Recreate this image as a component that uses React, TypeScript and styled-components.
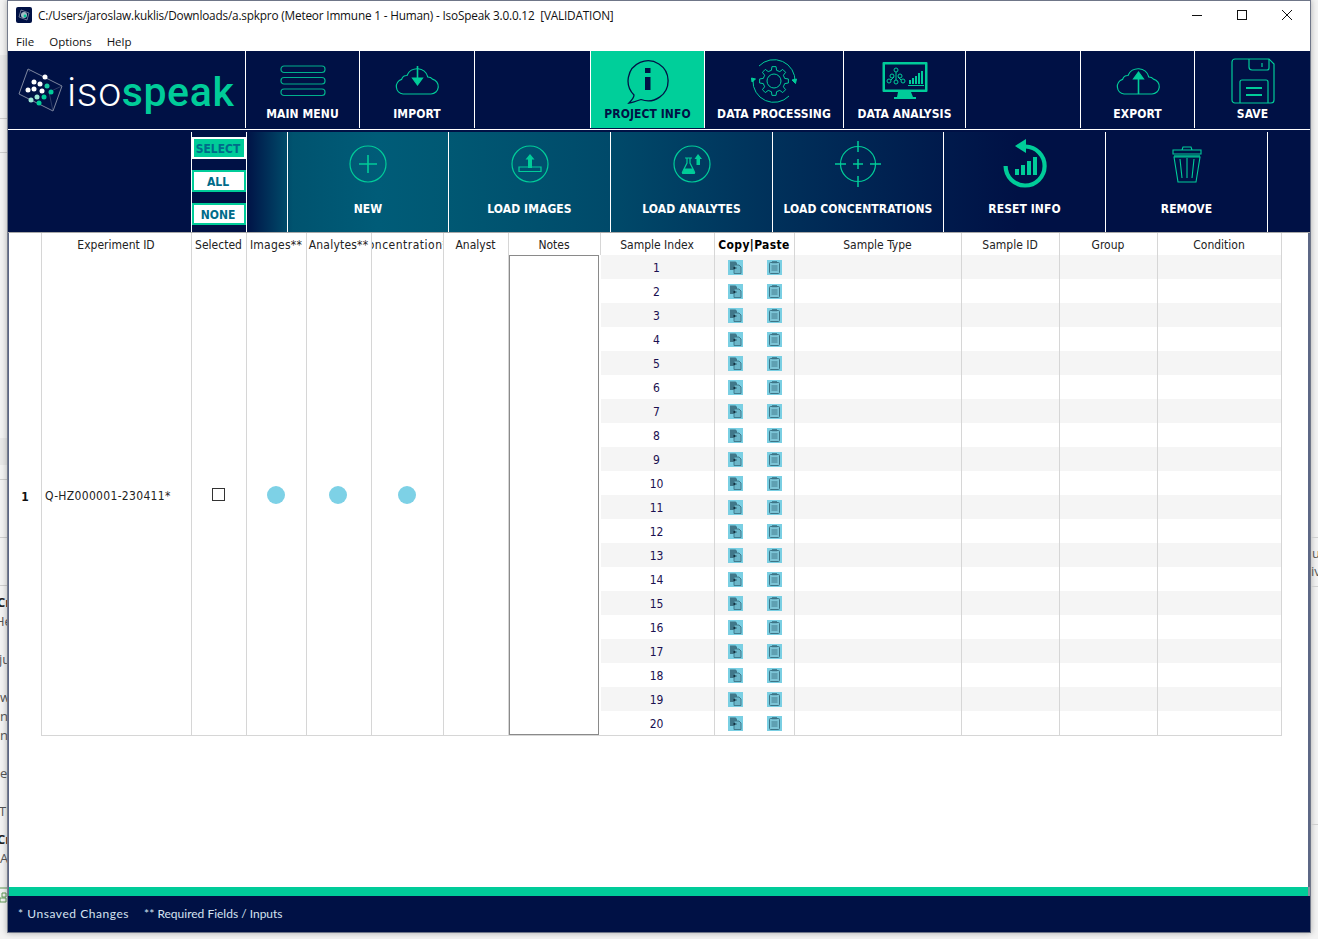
import React from "react";
import styled, { createGlobalStyle } from "styled-components";

const NAVY = "#001145";
const GREEN = "#00cc99";
const LINE = "#d6d6d6";
const LABEL_FONT = '"DejaVu Sans Condensed", "DejaVu Sans", sans-serif';

const Global = createGlobalStyle`
  html, body {
    margin: 0;
    padding: 0;
    background: #f3f3f3;
    overflow: hidden;
  }
  * {
    box-sizing: border-box;
  }
`;

const Page = styled.div`
  display: flex;
  width: 1318px;
  height: 939px;
  overflow: hidden;
  align-items: flex-start;
`;
const Gutter = styled.div`
  width: 7px;
  height: 939px;
  flex: none;
  overflow: hidden;
  display: flex;
  flex-direction: column;
  font-family: "Open Sans", sans-serif;
  font-size: 13px;
  line-height: 16px;
  color: #555;
`;
const Scrap = styled.div<{ $top: number; $bold?: boolean; $shift?: number }>`
  margin-top: ${({ $top }) => $top}px;
  margin-left: ${({ $shift }) => $shift ?? 0}px;
  height: 16px;
  flex: none;
  white-space: nowrap;
  font-weight: ${({ $bold }) => ($bold ? 700 : 400)};
  color: ${({ $bold }) => ($bold ? "#222" : "#555")};
`;
const Band = styled.div<{ $top: number; $height: number }>`
  margin-top: ${({ $top }) => $top}px;
  height: ${({ $height }) => $height}px;
  flex: none;
  background: #e9e9e9;
`;
const Rule = styled.div<{ $top: number }>`
  margin-top: ${({ $top }) => $top}px;
  height: 1px;
  flex: none;
  background: #cfcfcf;
`;
const BadgeScrap = styled.svg`
  margin-top: 21px;
  flex: none;
`;
const Win = styled.div`
  width: 1304px;
  height: 933px;
  flex: none;
  display: flex;
  flex-direction: column;
  background: #fff;
  border: 1px solid #6f7688;
  border-left-color: #757c8c;
  box-shadow: 0 0 6px rgba(0, 0, 0, 0.3);
`;
const TitleBar = styled.div`
  height: 31px;
  display: flex;
  align-items: center;
  padding: 0 0 3px 8px;
  flex: none;
`;
const TitleText = styled.span`
  margin-left: 6px;
  font-family: "Open Sans", sans-serif;
  font-size: 11.8px;
  color: #111;
  white-space: pre;
  letter-spacing: -0.016em;
`;
const WinButtons = styled.div`
  margin-left: auto;
  display: flex;
  align-items: center;
  gap: 35px;
  padding-right: 18px;
`;
const MenuBar = styled.div`
  height: 19px;
  display: flex;
  align-items: center;
  gap: 15px;
  padding: 0 0 1px 8px;
  flex: none;
  font-family: "Open Sans", sans-serif;
  font-size: 11.5px;
  color: #111;
`;
const TopNav = styled.div`
  height: 79px;
  display: flex;
  flex: none;
  padding-bottom: 1px;
  background: ${NAVY};
  border-bottom: 1px solid #fff;
`;
const LogoCell = styled.div`
  width: 238px;
  flex: none;
  display: flex;
  align-items: center;
  padding-left: 10px;
  border-right: 1px solid #fff;
`;
const LogoText = styled.div`
  margin-left: 4px;
  margin-top: 4px;
  font-family: Roboto, sans-serif;
  font-size: 41px;
  line-height: 48px;
  letter-spacing: 0.6px;
  font-weight: 300;
  color: #fff;
  white-space: nowrap;
`;
const LogoAccent = styled.span`
  font-weight: 500;
  color: ${GREEN};
`;
const NavCell = styled.div<{ $width: number; $active?: boolean }>`
  width: ${({ $width }) => $width}px;
  flex: none;
  display: flex;
  flex-direction: column;
  align-items: center;
  padding-top: 3px;
  border-right: 1px solid #fff;
  background: ${({ $active }) => ($active ? "#00cf9a" : "transparent")};
  color: ${({ $active }) => ($active ? NAVY : "#fff")};
  &:last-child {
    border-right: none;
  }
`;
const NavSlot = styled.div`
  height: 53px;
  display: flex;
  align-items: center;
  justify-content: center;
`;
const ToolLabel = styled.div`
  font-family: ${LABEL_FONT};
  font-weight: 700;
  font-size: 12px;
  line-height: 14px;
  letter-spacing: 0.08px;
  white-space: nowrap;
`;
const SubNav = styled.div`
  height: 103px;
  flex: none;
  padding-top: 2px;
  background: ${NAVY};
  border-bottom: 1px solid #a9a9a9;
`;
const SubRow = styled.div`
  height: 100px;
  display: flex;
  background: linear-gradient(
    90deg,
    ${NAVY} 238px,
    #00536f 285px,
    #005c78 370px,
    #005873 440px,
    #004a6a 600px,
    #00305a 770px,
    #001a4c 935px,
    ${NAVY} 1010px
  );
`;
const SubBlank = styled.div<{ $width: number }>`
  width: ${({ $width }) => $width}px;
  flex: none;
  border-right: 1px solid #fff;
`;
const SelectColumn = styled.div`
  width: 55px;
  flex: none;
  display: flex;
  flex-direction: column;
  gap: 11px;
  padding: 5px 0 0 0;
  border-right: 1px solid #fff;
  background: ${NAVY};
`;
const SelectChip = styled.div<{ $head?: boolean }>`
  height: 22px;
  display: flex;
  align-items: center;
  justify-content: center;
  padding: 1px 2px 0 0;
  font-family: ${LABEL_FONT};
  font-weight: 700;
  font-size: 12px;
  color: #006b8a;
  border: 2px solid ${({ $head }) => ($head ? "#fff" : GREEN)};
  background: ${({ $head }) => ($head ? GREEN : "#fff")};
`;
const SubCell = styled.div<{ $width: number }>`
  width: ${({ $width }) => $width}px;
  flex: none;
  display: flex;
  flex-direction: column;
  align-items: center;
  color: #fff;
  border-right: 1px solid #fff;
`;
const SubSlot = styled.div`
  height: 64px;
  display: flex;
  align-items: center;
  justify-content: center;
`;
const SubLabel = styled(ToolLabel)`
  margin-top: 6px;
`;
const Content = styled.div`
  flex: 1;
  min-height: 0;
  background: #fff;
  border-left: 1px solid #5c6785;
  border-right: 2px solid #5c6785;
`;
const Sheet = styled.div`
  display: grid;
  width: 1273px;
  grid-template-columns: 32px 151px 55px 60px 65px 72px 65px 92px 114px 80px 167px 98px 98px 124px;
  grid-template-rows: 22px repeat(19, 24px) 25px;
  font-family: ${LABEL_FONT};
  font-size: 12px;
  color: #222;
`;
const HeadCell = styled.div<{ $first?: boolean; $track?: number }>`
  display: flex;
  align-items: center;
  justify-content: center;
  overflow: hidden;
  white-space: nowrap;
  padding: 1px 1px 0 0;
  letter-spacing: ${({ $track }) => $track ?? 0}px;
  border-right: 1px solid ${LINE};
  border-left: ${({ $first }) => ($first ? `1px solid ${LINE}` : "none")};
`;
const HeadBold = styled(HeadCell)`
  font-weight: 700;
  color: #000;
  letter-spacing: 0.35px;
`;
const RowNo = styled.div`
  grid-column: 1;
  grid-row: 2 / span 20;
  display: flex;
  align-items: center;
  justify-content: center;
  padding-top: 2px;
  font-weight: 700;
  color: #111;
`;
const SpanCell = styled.div<{ $col: number; $first?: boolean; $left?: boolean }>`
  grid-column: ${({ $col }) => $col};
  grid-row: 2 / span 20;
  display: flex;
  align-items: center;
  justify-content: ${({ $left }) => ($left ? "flex-start" : "center")};
  padding: ${({ $left }) => ($left ? "1px 0 0 3px" : "0 2px 0 0")};
  letter-spacing: ${({ $left }) => ($left ? "0.32px" : "0")};
  border-right: 1px solid ${LINE};
  border-bottom: 1px solid ${LINE};
  border-left: ${({ $first }) => ($first ? `1px solid ${LINE}` : "none")};
`;
const NotesCell = styled(SpanCell)`
  border: none;
  border-bottom: 1px solid ${LINE};
  padding: 0;
  justify-content: flex-start;
`;
const NotesBox = styled.div`
  width: 90px;
  height: 100%;
  border: 1px solid #8a8a8a;
  background: #fff;
`;
const Box = styled.div`
  width: 13px;
  height: 13px;
  border: 1px solid #333;
  background: #fff;
  margin-top: -1px;
`;
const Dot = styled.div`
  width: 18px;
  height: 18px;
  border-radius: 50%;
  background: #7dd1e6;
`;
const BodyCell = styled.div<{ $odd: boolean; $last: boolean; $column: number; $row: number }>`
  grid-column: ${({ $column }) => $column};
  grid-row: ${({ $row }) => $row};
  display: flex;
  align-items: center;
  justify-content: center;
  padding: 1px 2px 0 0;
  background: ${({ $odd }) => ($odd ? "#f5f5f5" : "#fff")};
  border-bottom: ${({ $last }) => ($last ? `1px solid ${LINE}` : "none")};
  border-right: 1px solid ${LINE};
  color: #222;
`;
const IndexCell = styled(BodyCell)`
  font-size: 12px;
  color: #1a1050;
`;
const ActionCell = styled(BodyCell)`
  gap: 24px;
  padding: 1px 0 0 0;
`;
const AccentBar = styled.div`
  height: 9px;
  flex: none;
  background: ${GREEN};
  border-left: 1px solid #5c6785;
  border-right: 2px solid #8a8f9c;
`;
const Footer = styled.div`
  height: 36px;
  flex: none;
  display: flex;
  align-items: center;
  gap: 15px;
  padding: 0 0 1px 10px;
  background: ${NAVY};
  font-family: Lato, sans-serif;
  font-size: 12px;
  color: #d5e2f0;
  white-space: nowrap;
`;
const FootNote = styled.span<{ $track: number }>`
  letter-spacing: ${({ $track }) => $track}px;
`;

const gearPath = (cx: number, cy: number, ro: number, ri: number, teeth: number) => {
  const pts: string[] = [];
  const step = (Math.PI * 2) / teeth;
  for (let i = 0; i < teeth; i++) {
    const a = i * step;
    const offs: [number, number][] = [
      [-0.3, ri],
      [-0.18, ro],
      [0.18, ro],
      [0.3, ri],
    ];
    offs.forEach(([o, r]) => {
      const t = a + o * step;
      pts.push(`${(cx + Math.cos(t) * r).toFixed(2)} ${(cy + Math.sin(t) * r).toFixed(2)}`);
    });
  }
  return `M${pts.join("L")}Z`;
};

const Logo = () => (
  <svg width="45" height="44" viewBox="0 0 45 44" fill="none">
    <path d="M10 1 44 18 35 43 1 26Z" stroke="#8b93a8" strokeWidth="0.9" />
    <path d="M10 1 12 4M35 43 31 24 44 18" stroke="#5c6684" strokeWidth="0.5" />
    {[
      [27, 9, "#fff"],
      [16, 14, "#fff"],
      [22, 16, "#fff"],
      [29, 18, "#19c9a0"],
      [10, 22, "#fff"],
      [16, 21, "#fff"],
      [24, 23, "#fff"],
      [33, 24, GREEN],
      [19, 29, "#9fe8d6"],
      [26, 29, GREEN],
      [13, 32, "#9fe8d6"],
      [21, 35, GREEN],
    ].map(([x, y, c], i) => (
      <circle key={i} cx={x as number} cy={y as number} r="2.5" fill={c as string} />
    ))}
  </svg>
);

const MenuIcon = () => (
  <svg width="46" height="32" viewBox="0 0 46 32" fill="none" stroke={GREEN} strokeWidth="1.2" opacity="0.85">
    <rect x="1" y="1" width="44" height="6.5" rx="3" />
    <rect x="1" y="12.5" width="44" height="6.5" rx="3" />
    <rect x="1" y="24" width="44" height="6.5" rx="3" />
  </svg>
);

const CLOUD = "M9 28H37A7.5 7.5 0 0 0 38.5 13.2 6 6 0 0 0 33.8 11A11 11 0 0 0 13 9.5 5.5 5.5 0 0 0 7.6 13.4 7.5 7.5 0 0 0 9 28Z";

const ImportIcon = () => (
  <svg width="46" height="30" viewBox="0 0 46 30" fill="none" stroke={GREEN} strokeWidth="1.2">
    <path d={CLOUD} />
    <path d="M23.5 0V17" strokeWidth="1.6" />
    <path d="M18.5 12H28.5L23.5 19Z" fill={GREEN} />
  </svg>
);

const ExportIcon = () => (
  <svg width="46" height="30" viewBox="0 0 46 30" fill="none" stroke={GREEN} strokeWidth="1.2">
    <path d={CLOUD} />
    <path d="M23.5 28V10" strokeWidth="1.6" />
    <path d="M18.5 13H28.5L23.5 6Z" fill={GREEN} />
  </svg>
);

const InfoIcon = () => (
  <svg width="44" height="46" viewBox="0 0 44 46" fill="none">
    <path
      d="M3 45C6 42 8 39 8 37A20 20 0 1 1 15 41.5C11 43 7 44.5 3 45Z"
      stroke={NAVY}
      strokeWidth="1.3"
    />
    <rect x="19" y="10" width="5.5" height="5" fill={NAVY} />
    <rect x="19" y="19" width="5.5" height="13" fill={NAVY} />
  </svg>
);

const GearIcon = () => (
  <svg width="46" height="46" viewBox="0 0 46 46" fill="none" stroke={GREEN} strokeWidth="1">
    <path d={gearPath(23, 23, 14.5, 11, 8)} />
    <circle cx="23" cy="23" r="7" />
    <path d="M44 24A21 21 0 0 0 8 8M2 22A21 21 0 0 0 38 38" />
    <path d="M41 22 44.5 25.5 45.5 21ZM1 24 4.5 21 .5 20Z" fill={GREEN} />
  </svg>
);

const AnalysisIcon = () => (
  <svg width="46" height="37" viewBox="0 0 46 37" fill="none">
    <rect x="0.5" y="0" width="45" height="30" rx="1" fill={GREEN} />
    <rect x="3" y="2.5" width="40" height="25" fill={NAVY} />
    <path d="M16 30H29L31 35H34V37H12V35H15Z" fill={GREEN} />
    <g stroke={GREEN} strokeWidth="1">
      <circle cx="14" cy="8" r="2" />
      <circle cx="10" cy="14" r="2" />
      <circle cx="18" cy="14" r="2" />
      <circle cx="7" cy="19" r="2" />
      <circle cx="14" cy="20" r="2" />
      <circle cx="21" cy="19" r="2" />
      <path d="M14 10V18M9 18 12 15M19 18 16 15" />
    </g>
    <g fill={GREEN}>
      <rect x="27" y="18" width="2" height="4" />
      <rect x="30" y="16" width="2" height="6" />
      <rect x="33" y="14" width="2" height="8" />
      <rect x="36" y="11" width="2" height="11" />
      <rect x="39" y="9" width="2" height="13" />
      <rect x="26" y="23" width="16" height="1" />
    </g>
  </svg>
);

const SaveIcon = () => (
  <svg width="44" height="46" viewBox="0 0 44 46" fill="none" stroke={GREEN} strokeWidth="1.2">
    <path d="M4 1H38L43 6V42A3 3 0 0 1 40 45H4A3 3 0 0 1 1 42V4A3 3 0 0 1 4 1Z" />
    <path d="M18 1V9A3 3 0 0 0 21 12H36A2 2 0 0 0 38 10V1M31 5V9" />
    <path d="M9 45V24A2 2 0 0 1 11 22H35A2 2 0 0 1 37 24V45" />
    <path d="M15 30H31M15 37H31" strokeWidth="1.8" />
  </svg>
);

const PlusIcon = () => (
  <svg width="38" height="38" viewBox="0 0 38 38" fill="none" stroke={GREEN} strokeWidth="1.2">
    <circle cx="19" cy="19" r="18" />
    <path d="M19 10V28M10 19H28" strokeWidth="1.6" />
  </svg>
);

const ImagesIcon = () => (
  <svg width="38" height="38" viewBox="0 0 38 38" fill="none" stroke={GREEN} strokeWidth="1.2">
    <circle cx="19" cy="19" r="18" />
    <path d="M8 22V26.5H30V22H8Z" />
    <path d="M19 9 23.5 14.5H21V23H17V14.5H14.5Z" fill={GREEN} stroke="none" />
  </svg>
);

const AnalytesIcon = () => (
  <svg width="38" height="38" viewBox="0 0 38 38" fill="none" stroke={GREEN} strokeWidth="1.2">
    <circle cx="19" cy="19" r="18" />
    <path d="M12 13H19M14 13V18L9.5 27A1 1 0 0 0 10.5 28.5H20.5A1 1 0 0 0 21.5 27L17 18V13" />
    <path d="M11 23.5H20L21.5 28.5H9.5Z" fill={GREEN} stroke="none" />
    <path d="M25 9 29 14H27V20H23.5V14H21.5Z" fill={GREEN} stroke="none" />
  </svg>
);

const TargetIcon = () => (
  <svg width="48" height="48" viewBox="0 0 48 48" fill="none" stroke={GREEN} strokeWidth="1.2">
    <circle cx="24" cy="24" r="17.5" />
    <path d="M24 1V12M24 36V47M1 24H12M36 24H47M24 19V29M19 24H29" strokeWidth="1.5" />
  </svg>
);

const ResetIcon = () => (
  <svg width="46" height="50" viewBox="0 0 46 50" fill="none">
    <path d="M23.5 7.5A19.5 19.5 0 1 1 3.6 27" stroke={GREEN} strokeWidth="4.2" />
    <path d="M24 0V14L13 7Z" fill={GREEN} />
    <rect x="13" y="30" width="4" height="6" fill={GREEN} />
    <rect x="19" y="26" width="4" height="10" fill={GREEN} />
    <rect x="25" y="22" width="4" height="14" fill={GREEN} />
    <rect x="31" y="18" width="4" height="18" fill={GREEN} />
  </svg>
);

const TrashIcon = () => (
  <svg width="30" height="38" viewBox="0 0 30 38" fill="none" stroke={GREEN} strokeWidth="1.1">
    <path d="M1 5H29V9H1ZM10 5 11 2H19L20 5" />
    <path d="M2 12 6 37H24L28 12Z" />
    <path d="M8 14 10 33M15 13V33M22 14 20 33" />
    <path d="M2 11H28" strokeWidth="1.3" />
  </svg>
);

const CopyGlyph = () => (
  <svg width="15" height="15" viewBox="0 0 15 15">
    <rect width="15" height="15" fill="#7acfe3" />
    <path d="M2 1.5H7.5L9 3V10H2Z" fill="#41788a" />
    <path d="M6 5H11L13 7V13.5H6Z" fill="#6bb6c9" stroke="#3d7486" strokeWidth="0.9" />
    <path d="M5 8H8.5M6.5 6.8V9.2" stroke="#12303f" strokeWidth="1" />
  </svg>
);

const PasteGlyph = () => (
  <svg width="15" height="15" viewBox="0 0 15 15" fill="none">
    <rect width="15" height="15" fill="#7acfe3" />
    <rect x="2.5" y="2.5" width="10" height="11" rx="1" fill="#7cc4d6" stroke="#3d7486" strokeWidth="1" />
    <rect x="5" y="1.2" width="5" height="2" fill="#3d7486" />
    <path d="M4.5 6H10.5M4.5 8H10.5M4.5 10H10.5" stroke="#3d7486" strokeWidth="0.9" />
  </svg>
);

const AppMark = () => (
  <svg width="16" height="16" viewBox="0 0 16 16">
    <rect width="16" height="16" rx="2" fill={NAVY} />
    <path d="M5 3 13 6 11 13 3 10Z" fill="none" stroke="#9aa3b5" strokeWidth="0.7" />
    <circle cx="8" cy="8" r="3" fill="#cfe9e6" opacity="0.8" />
    <circle cx="9" cy="9" r="1.4" fill={GREEN} />
  </svg>
);

const MinGlyph = () => (
  <svg width="10" height="10" viewBox="0 0 10 10" stroke="#111" strokeWidth="1">
    <path d="M0 5.5H10" />
  </svg>
);
const MaxGlyph = () => (
  <svg width="10" height="10" viewBox="0 0 10 10" fill="none" stroke="#111" strokeWidth="1">
    <rect x="0.5" y="0.5" width="9" height="9" />
  </svg>
);
const CloseGlyph = () => (
  <svg width="10" height="10" viewBox="0 0 10 10" stroke="#111" strokeWidth="1">
    <path d="M0 0 10 10M10 0 0 10" />
  </svg>
);

const topCells = [
  { width: 114, label: "MAIN MENU", icon: <MenuIcon /> },
  { width: 115, label: "IMPORT", icon: <ImportIcon /> },
  { width: 116 },
  { width: 114, label: "PROJECT INFO", icon: <InfoIcon />, active: true },
  { width: 139, label: "DATA PROCESSING", icon: <GearIcon /> },
  { width: 122, label: "DATA ANALYSIS", icon: <AnalysisIcon /> },
  { width: 115 },
  { width: 114, label: "EXPORT", icon: <ExportIcon /> },
  { width: 115, label: "SAVE", icon: <SaveIcon /> },
];

const subCells = [
  { width: 161, label: "NEW", icon: <PlusIcon /> },
  { width: 162, label: "LOAD IMAGES", icon: <ImagesIcon /> },
  { width: 162, label: "LOAD ANALYTES", icon: <AnalytesIcon /> },
  { width: 171, label: "LOAD CONCENTRATIONS", icon: <TargetIcon /> },
  { width: 162, label: "RESET INFO", icon: <ResetIcon /> },
  { width: 162, label: "REMOVE", icon: <TrashIcon /> },
];

const headers: { text: string; track?: number }[] = [
  { text: "Experiment ID" },
  { text: "Selected" },
  { text: "Images**", track: 0.25 },
  { text: "Analytes**", track: 0.2 },
  { text: "Concentration**", track: 0.5 },
  { text: "Analyst" },
  { text: "Notes" },
  { text: "Sample Index" },
];

const rows = Array.from({ length: 20 }, (_, i) => i + 1);

const App = () => {
  return (
    <Page>
      <Global />
      <Gutter>
        <Band $top={55} $height={35} />
        <Rule $top={28} />
        <Rule $top={33} />
        <Band $top={285} $height={27} />
        <Rule $top={14} />
        <Rule $top={57} />
        <Rule $top={47} />
        <Scrap $top={8} $bold $shift={-3}>
          Cr
        </Scrap>
        <Scrap $top={3} $shift={-5}>
          He
        </Scrap>
        <Scrap $top={22} $shift={-1}>
          ju
        </Scrap>
        <Scrap $top={22}>w</Scrap>
        <Scrap $top={3}>n</Scrap>
        <Scrap $top={3}>n</Scrap>
        <Scrap $top={22}>e</Scrap>
        <Scrap $top={22} $shift={-1}>
          Th
        </Scrap>
        <Scrap $top={12} $bold $shift={-3}>
          Cr
        </Scrap>
        <Scrap $top={3}>A</Scrap>
        <BadgeScrap width="7" height="17" viewBox="0 0 7 17" fill="none" stroke="#5f9a55" strokeWidth="1">
          <path d="M0 1H7M2 6H6V10H2ZM0 11H6V15H0Z" />
        </BadgeScrap>
      </Gutter>
      <Win>
        <TitleBar>
          <AppMark />
          <TitleText>
            {"C:/Users/jaroslaw.kuklis/Downloads/a.spkpro (Meteor Immune 1 - Human) - IsoSpeak 3.0.0.12  [VALIDATION]"}
          </TitleText>
          <WinButtons>
            <MinGlyph />
            <MaxGlyph />
            <CloseGlyph />
          </WinButtons>
        </TitleBar>
        <MenuBar>
          <span>File</span>
          <span>Options</span>
          <span>Help</span>
        </MenuBar>
        <TopNav>
          <LogoCell>
            <Logo />
            <LogoText>
              iso<LogoAccent>speak</LogoAccent>
            </LogoText>
          </LogoCell>
          {topCells.map((c, i) => (
            <NavCell key={i} $width={c.width} $active={c.active}>
              <NavSlot>{c.icon}</NavSlot>
              {c.label && <ToolLabel>{c.label}</ToolLabel>}
            </NavCell>
          ))}
        </TopNav>
        <SubNav>
          <SubRow>
            <SubBlank $width={184} />
            <SelectColumn>
              <SelectChip $head>SELECT</SelectChip>
              <SelectChip>ALL</SelectChip>
              <SelectChip>NONE</SelectChip>
            </SelectColumn>
            <SubBlank $width={41} />
            {subCells.map((c) => (
              <SubCell key={c.label} $width={c.width}>
                <SubSlot>{c.icon}</SubSlot>
                <SubLabel>{c.label}</SubLabel>
              </SubCell>
            ))}
          </SubRow>
        </SubNav>
        <Content>
          <Sheet>
            <div />
            {headers.map((h, i) => (
              <HeadCell key={h.text} $first={i === 0} $track={h.track}>
                {h.text}
              </HeadCell>
            ))}
            <HeadBold>Copy|Paste</HeadBold>
            <HeadCell>Sample Type</HeadCell>
            <HeadCell>Sample ID</HeadCell>
            <HeadCell>Group</HeadCell>
            <HeadCell>Condition</HeadCell>

            <RowNo>1</RowNo>
            <SpanCell $col={2} $first $left>
              Q-HZ000001-230411*
            </SpanCell>
            <SpanCell $col={3}>
              <Box />
            </SpanCell>
            <SpanCell $col={4}>
              <Dot />
            </SpanCell>
            <SpanCell $col={5}>
              <Dot />
            </SpanCell>
            <SpanCell $col={6}>
              <Dot />
            </SpanCell>
            <SpanCell $col={7} />
            <NotesCell $col={8}>
              <NotesBox />
            </NotesCell>

            {rows.map((n) => {
              const cell = { $odd: n % 2 === 1, $last: n === 20, $row: n + 1 };
              return (
                <React.Fragment key={n}>
                  <IndexCell $column={9} {...cell}>
                    {n}
                  </IndexCell>
                  <ActionCell $column={10} {...cell}>
                    <CopyGlyph />
                    <PasteGlyph />
                  </ActionCell>
                  <BodyCell $column={11} {...cell} />
                  <BodyCell $column={12} {...cell} />
                  <BodyCell $column={13} {...cell} />
                  <BodyCell $column={14} {...cell} />
                </React.Fragment>
              );
            })}
          </Sheet>
        </Content>
        <AccentBar />
        <Footer>
          <FootNote $track={0.55}>* Unsaved Changes</FootNote>
          <FootNote $track={0}>** Required Fields / Inputs</FootNote>
        </Footer>
      </Win>
      <Gutter>
        <Rule $top={537} />
        <Scrap $top={7} $shift={1}>
          u
        </Scrap>
        <Scrap $top={2} $shift={0}>
          iv
        </Scrap>
        <Rule $top={7} />
        <Rule $top={237} />
      </Gutter>
    </Page>
  );
};

export default App;
